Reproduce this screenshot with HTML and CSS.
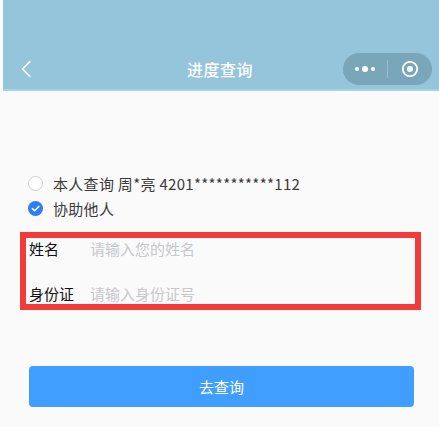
FILE: index.html
```html
<!DOCTYPE html>
<html lang="zh-CN">
<head>
<meta charset="utf-8">
<title>进度查询</title>
<link rel="stylesheet" href="styles.css">
</head>
<body>
<div class="page">
  <header class="header">
    <div class="navbar">
      <div class="nav-left">
        <svg class="back" width="12" height="18" viewBox="0 0 12 18"><path d="M10 1.5 L2.5 9 L10 16.5" fill="none" stroke="#fff" stroke-width="1.4" stroke-linecap="round" stroke-linejoin="round"/></svg>
      </div>
      <div class="title">进度查询</div>
      <div class="nav-right">
        <div class="capsule">
          <span class="cap-btn">
            <svg width="26" height="10" viewBox="0 0 26 10"><circle cx="5" cy="5" r="2" fill="#fff"/><circle cx="13" cy="5" r="3" fill="#fff"/><circle cx="21" cy="5" r="2" fill="#fff"/></svg>
          </span>
          <span class="cap-sep"></span>
          <span class="cap-btn">
            <svg width="18" height="18" viewBox="0 0 18 18"><circle cx="9" cy="9" r="7.2" fill="none" stroke="#fff" stroke-width="1.8"/><circle cx="9" cy="9" r="3" fill="#fff"/></svg>
          </span>
        </div>
      </div>
    </div>
  </header>

  <main class="content">
    <div class="options">
      <label class="option">
        <span class="radio"></span>
        <span class="option-text">本人查询 周*亮 4201***********112</span>
      </label>
      <label class="option">
        <span class="radio checked">
          <svg width="15" height="15" viewBox="0 0 15 15"><path d="M4.3 7.6 L6.6 9.8 L10.8 5.4" fill="none" stroke="#fff" stroke-width="1.5" stroke-linecap="round" stroke-linejoin="round"/></svg>
        </span>
        <span class="option-text">协助他人</span>
      </label>
    </div>

    <div class="form-box">
      <div class="field">
        <span class="field-label">姓名</span>
        <input class="field-input" type="text" placeholder="请输入您的姓名">
      </div>
      <div class="field">
        <span class="field-label">身份证</span>
        <input class="field-input" type="text" placeholder="请输入身份证号">
      </div>
    </div>

    <button class="submit" type="button">去查询</button>
  </main>
</div>
</body>
</html>
```

FILE: styles.css
```css
* {
  box-sizing: border-box;
}

html, body {
  margin: 0;
  padding: 0;
  background: #fff;
}

body {
  font-family: "Noto Sans CJK SC", "Noto Sans", "Liberation Sans", sans-serif;
  color: #333;
}

.page {
  min-height: 427px;
  background: #fafafa;
}

.header {
  margin-left: 3px;
  height: 91px;
  background: #95c5db;
  border-bottom: 2px solid #a6d2e5;
  padding-top: 53px;
}

.navbar {
  height: 32px;
  display: grid;
  grid-template-columns: 1fr auto 1fr;
  align-items: center;
}

.nav-left {
  display: flex;
  align-items: center;
  padding-left: 17px;
}

.back {
  display: block;
}

.title {
  font-size: 16px;
  font-weight: 500;
  color: #fff;
  line-height: 32px;
  padding-right: 2px;
  letter-spacing: 0.5px;
}

.nav-right {
  display: flex;
  justify-content: flex-end;
  padding-right: 7px;
}

.capsule {
  width: 89px;
  height: 32px;
  border-radius: 16px;
  background: #7aa6ba;
  display: flex;
  align-items: center;
}

.cap-btn {
  flex: 1;
  display: flex;
  align-items: center;
  justify-content: center;
}

.cap-btn svg {
  display: block;
}

.cap-sep {
  width: 1px;
  height: 18px;
  background: rgba(255, 255, 255, 0.25);
}

.content {
  padding-top: 80px;
}

.options {
  padding-left: 28px;
}

.option {
  display: flex;
  align-items: center;
  height: 25px;
}

.radio {
  width: 15px;
  height: 15px;
  border-radius: 50%;
  border: 1px solid #cfcfcf;
  background: #fff;
  margin-right: 10px;
  flex: none;
  display: flex;
  align-items: center;
  justify-content: center;
}

.radio.checked {
  border: none;
  background: #2e7cf6;
}

.radio svg {
  display: block;
}

.option-text {
  font-size: 15px;
  color: #3a3a3a;
  line-height: 25px;
  letter-spacing: 0.3px;
}

.form-box {
  margin: 11px 0 0 20px;
  width: 401px;
  border: 6px solid #f23a3a;
  padding: 0 0 0 3px;
  display: flex;
  flex-direction: column;
  gap: 24px;
}

.field {
  display: flex;
  align-items: center;
  height: 21px;
}

.field-label {
  width: 61px;
  flex: none;
  font-size: 15px;
  color: #111;
  line-height: 21px;
}

.field-input {
  flex: 1;
  min-width: 0;
  border: none;
  outline: none;
  background: transparent;
  padding: 0;
  font-family: inherit;
  font-size: 15px;
  color: #333;
  height: 21px;
}

.field-input::placeholder {
  color: #c6c8cc;
}

.submit {
  display: block;
  margin: 56px 0 0 29px;
  width: 385px;
  height: 41px;
  border: none;
  border-radius: 4px;
  background: #409eff;
  color: #fff;
  font-family: inherit;
  font-size: 15px;
  cursor: pointer;
}
```
